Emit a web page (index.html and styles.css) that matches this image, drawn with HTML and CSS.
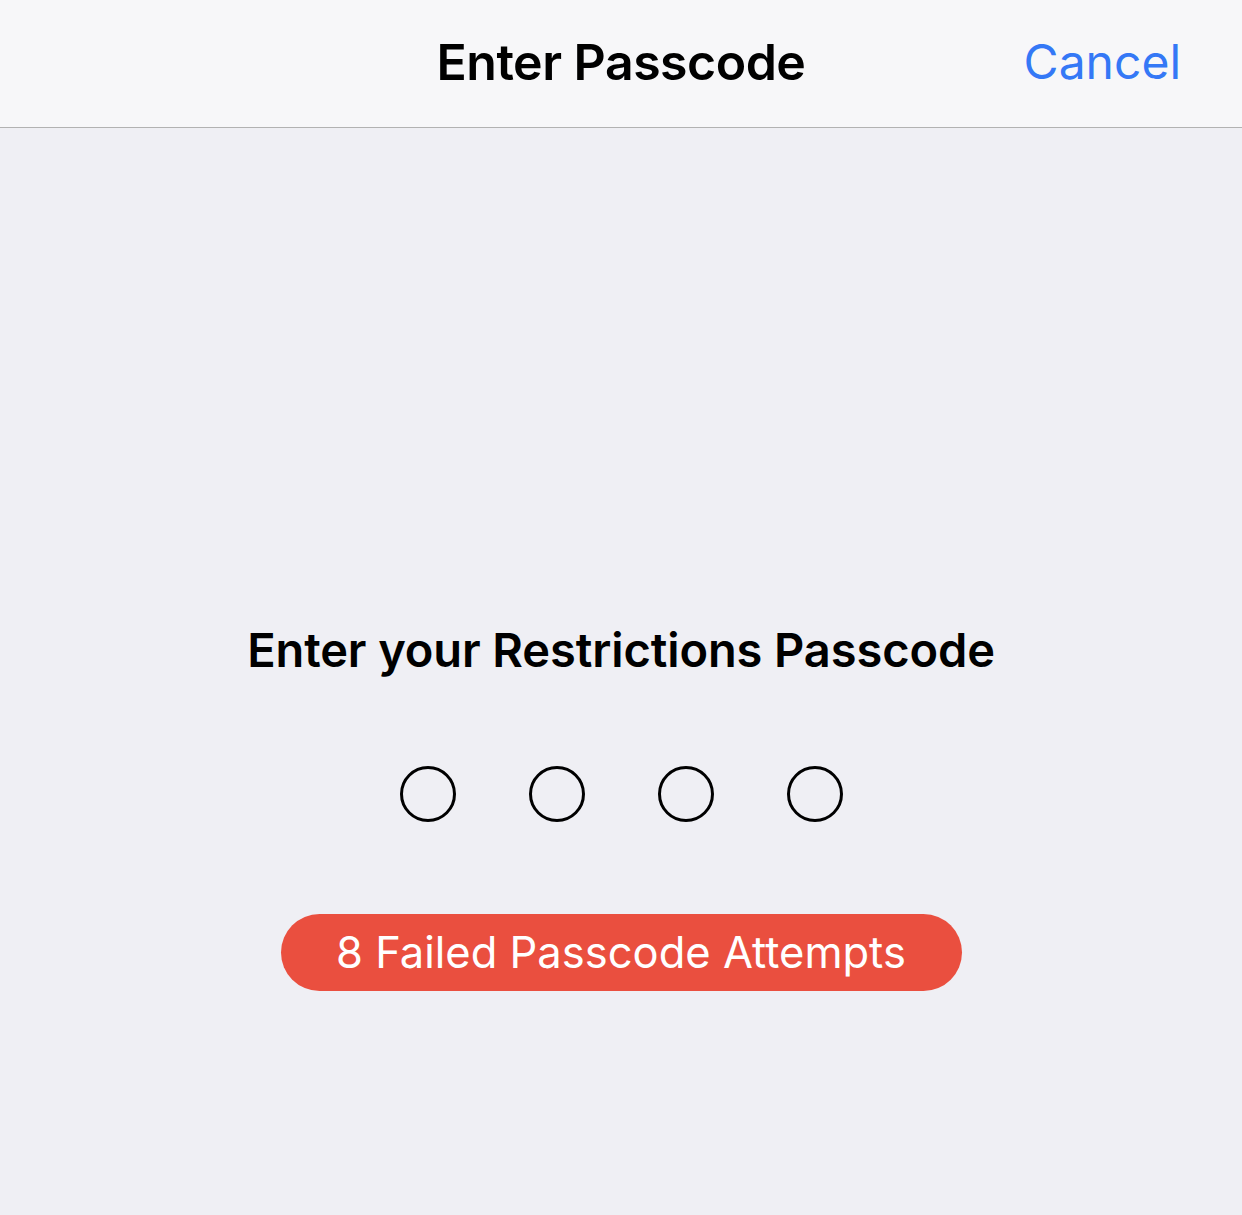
FILE: index.html
```html
<html>
    <head>
        <title>Enter Passcode</title>
        <meta name="viewport" content="width=device-width, initial-scale=1.0">
        <link rel="stylesheet" href="styles.css">
    </head>
    <body>
        <div class="nav-bar">
            <div></div>
            <h1 class="nav-title">Enter Passcode</h1>
            <a class="nav-cancel" href="#">Cancel</a>
        </div>
        <div class="content">
            <h2 class="prompt">Enter your Restrictions Passcode</h2>
            <div class="dots">
                <span class="dot"></span>
                <span class="dot"></span>
                <span class="dot"></span>
                <span class="dot"></span>
            </div>
            <div class="failed">8 Failed Passcode Attempts</div>
        </div>
    </body>
</html>
```

FILE: styles.css
```css
body {
    margin: 0;
    background-color: #EFEFF4;
    font-family: Inter, 'Noto Sans', sans-serif;
    color: #000;
}
.nav-bar {
    display: grid;
    grid-template-columns: 1fr auto 1fr;
    align-items: center;
    height: 123px;
    padding: 0 61px 4px 61px;
    background-color: #F7F7F9;
    border-bottom: 1px solid #B2B2B2;
}
.nav-title {
    margin: 0;
    font-size: 50px;
    font-weight: 600;
    letter-spacing: -0.5px;
}
.nav-cancel {
    justify-self: end;
    color: #3478F6;
    text-decoration: none;
    font-size: 48px;
    font-weight: 400;
}
.content {
    display: flex;
    flex-direction: column;
    align-items: center;
    padding-top: 492px;
}
.prompt {
    margin: 0;
    font-size: 47px;
    font-weight: 600;
    line-height: 60px;
    letter-spacing: -0.1px;
}
.dots {
    display: flex;
    gap: 73px;
    margin-top: 86px;
}
.dot {
    width: 50px;
    height: 50px;
    border: 3px solid #000;
    border-radius: 50%;
}
.failed {
    margin-top: 92px;
    width: 681px;
    height: 77px;
    line-height: 77px;
    text-align: center;
    background-color: #EA4F3F;
    color: #fff;
    border-radius: 39px;
    font-size: 43.5px;
    font-weight: 400;
}
```
